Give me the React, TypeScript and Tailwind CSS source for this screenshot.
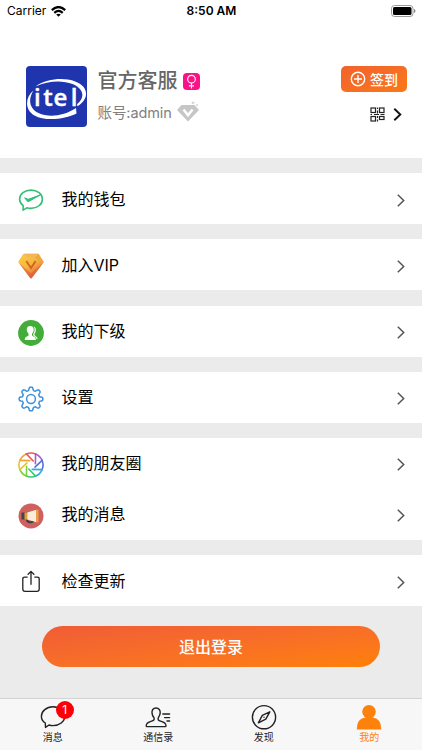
import type { ReactNode } from "react";

const petals = [
  "#f0a33a", "#ee5a4f", "#a35fd0", "#5b6fd8", "#35a9e0", "#37c978", "#7dcf3c", "#e3c437",
];

function WalletIcon() {
  return (
    <svg width="26" height="26" viewBox="0 0 26 26" fill="none" stroke="#35be75" strokeWidth="1.6" strokeLinejoin="round">
      <path d="M5.2 18.6C2.9 16.9 1.6 14.7 1.6 12.2C1.6 7 6.7 3.1 13 3.1S24.4 7 24.4 12.2S19.3 21.4 13 21.4C11.5 21.4 10.1 21.2 8.8 20.8L5.1 23.2Z" />
      <path d="M6.6 10.8L9.6 14.4Q10 14.9 10.7 14.5L23 7.6L11 12.1Q10.2 12.4 9.6 12Z" fill="#35be75" strokeWidth="1" />
    </svg>
  );
}

function VipIcon() {
  return (
    <svg width="26" height="26" viewBox="0 0 26 26">
      <defs>
        <linearGradient id="gem" x1="0" y1="0" x2="0.6" y2="1">
          <stop stopColor="#fdd044" />
          <stop offset="0.55" stopColor="#f6b440" />
          <stop offset="1" stopColor="#de633c" />
        </linearGradient>
      </defs>
      <path d="M6.3 .5H19.7Q20.5 .5 21 1.2L25.4 8.3Q25.9 9.2 25.2 10L14 24.8Q13 26 12 24.8L.8 10Q.1 9.2 .6 8.3L5 1.2Q5.5 .5 6.3 .5Z" fill="url(#gem)" />
      <path d="M5.5 .9H20.5L17 4.5H9Z" fill="#f3b757" />
      <path d="M20.5 1.1L25.4 9.2L19 7L17 4.5Z" fill="#eda743" />
      <path d="M1 10L12.8 20.5L25 10L13.7 25.2H12.3Z" fill="#d9523c" opacity=".5" />
      <path d="M8.3 8L13 15L17.7 8" fill="none" stroke="#d0681f" strokeWidth="2" />
    </svg>
  );
}

function TeamIcon() {
  return (
    <svg width="26" height="26" viewBox="0 0 26 26">
      <circle cx="13" cy="13" r="12.9" fill="#43ad3a" />
      <g fill="#fff">
        <path d="M12.2 6C9.9 6 8.7 7.5 8.8 9.8C8.9 11.6 9.6 12.6 10.5 13.7V15.2C10.4 16.5 7 16.4 6.8 18.9V20H17.8V18.9C17.5 16.4 14.2 16.5 14 15.2V13.7C15 12.6 15.6 11.6 15.7 9.8C15.8 7.5 14.5 6 12.2 6Z" />
        <path d="M15.4 6.5C17.4 7.1 18 8.5 17.8 10.4C17.7 12 17.2 12.9 16.4 13.8V15C17 16.3 19.5 16.8 19.6 18.9H18.7C18.1 16.9 15.6 16.6 15.2 15.2V13.8C16.7 12.2 17.4 8.2 15.4 6.5Z" />
      </g>
    </svg>
  );
}

function GearIcon() {
  const steps = 96;
  const points = Array.from({ length: steps }, (_, i) => {
    const angle = (i * 2 * Math.PI) / steps;
    const wave = Math.tanh(2.2 * Math.cos(angle * 8));
    const radius = 10.3 + 1.6 * wave;
    return `${13 + Math.cos(angle) * radius},${13 + Math.sin(angle) * radius}`;
  });
  return (
    <svg width="26" height="26" viewBox="0 0 26 26" fill="none" stroke="#3d91dc" strokeWidth="1.5" strokeLinejoin="round">
      <polygon points={points.join(" ")} />
      <circle cx="13" cy="13" r="4.4" />
    </svg>
  );
}

function MomentsIcon() {
  return (
    <svg width="26" height="26" viewBox="0 0 26 26" fill="none" strokeWidth="1.6" strokeLinecap="round">
      {petals.map((color, i) => (
        <g key={color} stroke={color} transform={`rotate(${i * 45 - 45} 13 13)`}>
          <path d="M8.4 1.9A12 12 0 0 1 17.6 1.9" />
          <path d="M8.4 1.9L15.2 9" />
        </g>
      ))}
    </svg>
  );
}

function HornIcon() {
  return (
    <svg width="26" height="26" viewBox="0 0 26 26">
      <circle cx="13" cy="13" r="12.5" fill="#ce605d" />
      <path d="M8.7 16.5Q9.2 19.3 12.5 19.3Q15.6 19.3 15.8 16.5" fill="none" stroke="#3d3e48" strokeWidth="1.8" />
      <path d="M4.2 9.5H9V16.6H4.2Q3.5 16.6 3.5 16V10.2Q3.5 9.5 4.2 9.5Z" fill="#47434c" />
      <path d="M6.5 9.5H9.5V16.6H6.5Z" fill="#e99a38" />
      <path d="M9.3 9.5L18.4 6.7V19.3L9.3 16.6Z" fill="#faecd6" />
      <path d="M18.2 6.7H20.5V19.3H18.2Z" fill="#ed9f3c" />
    </svg>
  );
}

function UpdateIcon() {
  return (
    <svg width="26" height="26" viewBox="0 0 26 26" fill="none" stroke="#222" strokeWidth="1.3" strokeLinecap="round" strokeLinejoin="round">
      <path d="M9.2 8.1H6.7Q4.8 8.1 4.8 10V20Q4.8 22.3 7 22.3H19Q21.2 22.3 21.2 20V10Q21.2 8.1 19.3 8.1H16.8" />
      <path d="M13 15.3V2.6M10.1 5.2L13 2.4L15.9 5.2" />
    </svg>
  );
}

function Chevron() {
  return (
    <svg width="8" height="13" viewBox="0 0 8 13" fill="none" stroke="#555" strokeWidth="1.5" className="mt-[3px]">
      <path d="M.8 .7L6.7 6.5L.8 12.3" />
    </svg>
  );
}

function Row({ icon, label }: { icon: ReactNode; label: string }) {
  return (
    <div className="flex h-[51px] items-center bg-white pr-[17px] pl-[18px]">
      <div className="mt-[3px]">{icon}</div>
      <span className="ml-[17.5px] flex-1 text-[16px] leading-6 text-black">{label}</span>
      <Chevron />
    </div>
  );
}

function StatusBar() {
  return (
    <div className="flex h-[22px] items-center justify-between pr-[6px] pl-[7px] text-[12px] text-black">
      <div className="flex w-28 items-center gap-[5px]">
        <span>Carrier</span>
        <svg width="15" height="11" viewBox="0 0 15 11" fill="none" stroke="#000" strokeWidth="2.2">
          <path d="M.8 4.1Q7.5 -2 14.2 4.1M3.3 6.8Q7.5 3.1 11.7 6.8" />
          <path d="M7.5 10.8L5.2 8.5Q7.5 6.8 9.8 8.5Z" fill="#000" stroke="none" />
        </svg>
      </div>
      <span className="font-semibold">8:50 AM</span>
      <div className="flex w-28 justify-end">
        <svg width="25" height="12" viewBox="0 0 25 12">
          <rect x=".5" y=".5" width="21.5" height="11" rx="3" fill="#fff" stroke="#999" />
          <rect x="2" y="2" width="18.5" height="8" rx="1.5" />
          <path d="M23 4Q24.5 4.5 24.5 6T23 8Z" fill="#888" />
        </svg>
      </div>
    </div>
  );
}

function Logo() {
  return (
    <svg width="61" height="61" viewBox="0 0 61 61">
      <rect width="61" height="61" rx="4" fill="#1e35ae" />
      <path d="M9.5 20.5C21 12.5 37 11.5 48 15C64 20.5 63 33.5 51.5 40.2L51 38.2C59 32 58.5 23 46.5 18C36 14 22 14.8 9.5 20.5Z" fill="#fff" />
      <path d="M7.5 24.5C-1.5 32 -1 44 8.5 49.5C19 55.5 39 53.5 50.5 47.5L50 42C38 50 23 52 12.5 47C3 42.5 2 33 7.5 24.5Z" fill="#fff" />
      <text y="39.7" x="8 17.3 27.6 44.8" fill="#fff" fontFamily="Open Sans, Noto Sans, sans-serif" fontWeight="600" fontSize="24" stroke="#fff" strokeWidth=".4">itel</text>
    </svg>
  );
}

function Profile() {
  return (
    <div className="flex h-[136px] items-start pt-[44px] pr-[15px] pl-[26px]">
      <Logo />
      <div className="ml-[10.5px] flex-1">
        <div className="flex h-[30px] items-center">
          <span className="text-[20px] leading-[30px] font-medium text-[#666]">官方客服</span>
          <svg width="17" height="17" viewBox="0 0 17 17" className="mt-px ml-[5px]">
            <rect width="17" height="17" rx="4" fill="#fb1286" />
            <g fill="none" stroke="#fff" strokeWidth="1.1">
              <circle cx="8.5" cy="6.2" r="3.8" />
              <path d="M8.5 10V15.5M6 12.9H11" />
            </g>
          </svg>
        </div>
        <div className="flex h-[30px] items-center">
          <span className="mt-[3px] text-[14.5px] leading-[22px] tracking-[-0.1px] text-[#808080]">账号:admin</span>
          <svg width="23" height="21" viewBox="0 0 23 21" className="ml-[5px]">
            <path d="M4.5 4H17.5L22 9L11 20.5L0 9Z" fill="#c6c6c6" />
            <path d="M6.5 8.5L11 14.3L15.5 8.5" fill="none" stroke="#fff" strokeWidth="2.5" />
            <path d="M16 0L16.6 1.2L18 1.8L16.6 2.4L16 3.6L15.4 2.4L14 1.8L15.4 1.2ZM20 2.7L20.5 3.6L21.4 4L20.5 4.5L20 5.4L19.5 4.5L18.6 4L19.5 3.6Z" fill="#ccc" />
          </svg>
        </div>
      </div>
      <div className="flex flex-col items-end">
        <button className="flex h-[26px] w-[66px] items-center rounded-[5px] bg-linear-to-br from-[#f1622e] to-[#fb7815] pl-[9px] text-white">
          <svg width="16" height="16" viewBox="0 0 16 16" fill="none" stroke="#fff" strokeWidth="1.4">
            <circle cx="8" cy="8" r="6.7" />
            <path d="M8 4V12M4 8H12" />
          </svg>
          <span className="mt-px ml-1 text-[14px] leading-5 font-medium whitespace-nowrap">签到</span>
        </button>
        <div className="mt-[15px] mr-[5px] flex items-center gap-[8px]">
          <svg width="15" height="15" viewBox="0 0 15 15" fill="none" stroke="#222" strokeWidth="1.2">
            <rect x="1" y="1" width="4.5" height="4.5" />
            <rect x="9.5" y="1" width="4.5" height="4.5" />
            <rect x="1" y="9.5" width="4.5" height="4.5" />
            <rect x="9.5" y="9.5" width="4.5" height="3" />
            <path d="M7.5 .5V2M7.5 3.5V6.5M.5 7.5H2M4 7.5H9M10.5 7.5H14.5M7.5 9V11M7.5 12.5V14.5" />
          </svg>
          <svg width="9" height="13" viewBox="0 0 9 13" fill="none" stroke="#111" strokeWidth="1.9">
            <path d="M1.3 .8L7.3 6.5L1.3 12.2" />
          </svg>
        </div>
      </div>
    </div>
  );
}

function Tab({ icon, label, active }: { icon: ReactNode; label: string; active?: boolean }) {
  return (
    <div className={`flex flex-1 flex-col items-center pt-[5px] ${active ? "text-[#fd820b]" : "text-[#222]"}`}>
      <div className="relative h-[26px]">{icon}</div>
      <span className="text-[10px] leading-[14px]">{label}</span>
    </div>
  );
}

function TabBar() {
  return (
    <div className="flex h-[52px] border-t border-[#d3d3d3] bg-[#f7f7f7]">
      <Tab
        label="消息"
        icon={
          <>
            <svg width="26" height="26" viewBox="0 0 26 26" fill="none" stroke="#222" strokeWidth="1.4" strokeLinejoin="round">
              <path d="M5.3 19C2.7 17.2 1.4 15.1 1.4 12.4C1.4 7.1 6.5 2.8 13 2.8S24.6 7.1 24.6 12.4S19.5 21.6 13 21.6C11.6 21.6 10.2 21.4 9 21L5.5 23.4Z" />
            </svg>
            <span className="absolute -top-[3px] left-[16px] flex size-[18px] items-center justify-center rounded-full bg-[#fb0006] text-[12px] text-white">1</span>
          </>
        }
      />
      <Tab
        label="通信录"
        icon={
          <svg width="26" height="26" viewBox="0 0 26 26" fill="none" stroke="#222" strokeWidth="1.4" strokeLinecap="round" strokeLinejoin="round">
            <path d="M11 4C8 4 6.8 6.3 7 8.9C7.1 11.1 7.9 12.4 9 13.8C9.8 15.7 8.5 16.5 6.6 17.2C3.5 18.3 1.4 18.4 1.2 21.7C1.2 22.3 1.5 22.6 2 22.6H20.3C20.8 22.6 21 22.3 21 21.7C20.8 18.4 18.5 18.3 15.6 17.2C13.6 16.5 12.5 15.7 13.3 13.8C14.2 12.4 15.1 11.1 15.2 8.9C15.4 6.3 14 4 11 4Z" />
            <path d="M17.8 10H24.6M19.6 13.6H24.6M22 17H24.6" />
          </svg>
        }
      />
      <Tab
        label="发现"
        icon={
          <svg width="26" height="26" viewBox="0 0 26 26" fill="none" stroke="#222" strokeWidth="1.4" strokeLinejoin="round">
            <circle cx="13" cy="13.2" r="11.6" />
            <path d="M18.8 7.8L11.3 11.4L7.4 18.8L14.8 15.2Z" />
            <circle cx="13" cy="13.2" r=".7" fill="#222" stroke="none" />
          </svg>
        }
      />
      <Tab
        active
        label="我的"
        icon={
          <svg width="26" height="26" viewBox="0 0 26 26" fill="#fd820b">
            <circle cx="13" cy="7.8" r="6.8" />
            <path d="M.8 25Q.8 14.8 9 13.6H17Q25.2 14.8 25.2 25Q25.2 25.6 24.7 25.6H1.3Q.8 25.6 .8 25Z" />
          </svg>
        }
      />
    </div>
  );
}

export default function App() {
  return (
    <div className="flex h-[750px] w-[422px] flex-col overflow-hidden bg-[#ebebeb] font-['Inter','Noto_Sans_CJK_SC',sans-serif]">
      <div className="bg-white">
        <StatusBar />
        <Profile />
      </div>
      <div className="mt-[15.2px] flex flex-col gap-[15.2px]">
        <Row icon={<WalletIcon />} label="我的钱包" />
        <Row icon={<VipIcon />} label="加入VIP" />
        <Row icon={<TeamIcon />} label="我的下级" />
        <Row icon={<GearIcon />} label="设置" />
        <div>
          <Row icon={<MomentsIcon />} label="我的朋友圈" />
          <Row icon={<HornIcon />} label="我的消息" />
        </div>
        <Row icon={<UpdateIcon />} label="检查更新" />
      </div>
      <button className="mx-[42px] mt-5 h-[41px] shrink-0 rounded-full bg-linear-to-br from-[#f05c36] to-[#ff8000] text-[16px] font-medium text-white">
        退出登录
      </button>
      <div className="mt-auto">
        <TabBar />
      </div>
    </div>
  );
}
